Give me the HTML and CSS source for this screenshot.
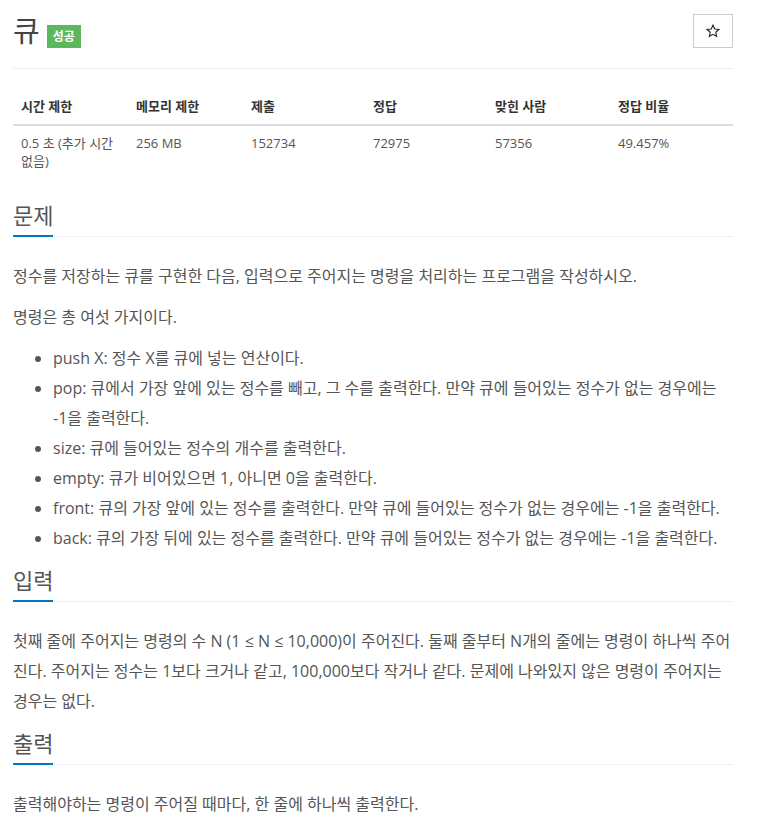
FILE: index.html
```html
<!DOCTYPE html>
<html lang="ko">
<head>
<meta charset="utf-8">
<title>큐</title>
<link rel="stylesheet" href="styles.css">
</head>
<body>
<div class="page">
  <div class="title-row">
    <div class="title-group">
      <h1 class="title">큐</h1>
      <span class="badge">성공</span>
    </div>
    <button class="star-btn" type="button" aria-label="즐겨찾기">
      <svg width="14" height="14" viewBox="0 0 24 24"><polygon points="12,2 15,8.6 22,9.4 16.8,14.2 18.2,21.2 12,17.7 5.8,21.2 7.2,14.2 2,9.4 9,8.6" fill="none" stroke="#2a2a2a" stroke-width="2" stroke-linejoin="miter"/></svg>
    </button>
  </div>
  <hr class="rule">
  <table class="info">
    <thead>
      <tr><th class="c1">시간 제한</th><th class="c2">메모리 제한</th><th class="c3">제출</th><th class="c4">정답</th><th class="c5">맞힌 사람</th><th class="c6">정답 비율</th></tr>
    </thead>
    <tbody>
      <tr><td>0.5 초 (추가 시간 없음)</td><td>256 MB</td><td>152734</td><td>72975</td><td>57356</td><td>49.457%</td></tr>
    </tbody>
  </table>

  <section class="section">
    <div class="headline"><h2>문제</h2></div>
    <div class="text">
      <p>정수를 저장하는 큐를 구현한 다음, 입력으로 주어지는 명령을 처리하는 프로그램을 작성하시오.</p>
      <p>명령은 총 여섯 가지이다.</p>
      <ul>
        <li>push X: 정수 X를 큐에 넣는 연산이다.</li>
        <li>pop: 큐에서 가장 앞에 있는 정수를 빼고, 그 수를 출력한다. 만약 큐에 들어있는 정수가 없는 경우에는 -1을 출력한다.</li>
        <li>size: 큐에 들어있는 정수의 개수를 출력한다.</li>
        <li>empty: 큐가 비어있으면 1, 아니면 0을 출력한다.</li>
        <li>front: 큐의 가장 앞에 있는 정수를 출력한다. 만약 큐에 들어있는 정수가 없는 경우에는 -1을 출력한다.</li>
        <li>back: 큐의 가장 뒤에 있는 정수를 출력한다. 만약 큐에 들어있는 정수가 없는 경우에는 -1을 출력한다.</li>
      </ul>
    </div>
  </section>

  <section class="section">
    <div class="headline"><h2>입력</h2></div>
    <div class="text">
      <p>첫째 줄에 주어지는 명령의 수 N (1 ≤ N ≤ 10,000)이 주어진다. 둘째 줄부터 N개의 줄에는 명령이 하나씩 주어진다. 주어지는 정수는 1보다 크거나 같고, 100,000보다 작거나 같다. 문제에 나와있지 않은 명령이 주어지는 경우는 없다.</p>
    </div>
  </section>

  <section class="section">
    <div class="headline"><h2>출력</h2></div>
    <div class="text">
      <p>출력해야하는 명령이 주어질 때마다, 한 줄에 하나씩 출력한다.</p>
    </div>
  </section>
</div>
</body>
</html>
```
FILE: styles.css
```css
* { box-sizing: border-box; }
html, body { margin: 0; padding: 0; background: #fff; }
body {
  font-family: "Open Sans", "Noto Sans CJK KR", sans-serif;
  color: #555;
  font-size: 13px;
  line-height: 1.42857;
}
.page {
  width: 720px;
  margin-left: 13px;
}
.title-row {
  display: flex;
  justify-content: space-between;
  align-items: flex-start;
  margin-top: 14px;
  height: 34px;
}
.title-group {
  display: flex;
  align-items: flex-start;
}
.title {
  margin: 0;
  font-size: 29px;
  font-weight: 400;
  line-height: 34px;
  color: #444;
}
.badge {
  margin-left: 7px;
  margin-top: 11px;
  background: #5cb85c;
  color: #fff;
  font-size: 12px;
  font-weight: 700;
  line-height: 15px;
  padding: 4px 6px;
}
.star-btn {
  width: 40px;
  height: 34px;
  border: 1px solid #ccc;
  background: #fff;
  padding: 0;
  display: flex;
  align-items: center;
  justify-content: center;
}
.rule {
  border: 0;
  border-top: 1px solid #eee;
  margin: 20px 0;
}
.info {
  width: 720px;
  border-collapse: collapse;
  margin-bottom: 20px;
  table-layout: fixed;
}
.info th, .info td {
  text-align: left;
  padding: 8px;
  vertical-align: top;
  line-height: 18.5px;
}
.info th {
  font-weight: 700;
  color: #333;
  border-bottom: 2px solid #ddd;
}
.c1, .c2 { width: 115px; }
.c3, .c4 { width: 122px; }
.c5, .c6 { width: 123px; }
.section { margin: 0; }
.headline {
  border-bottom: 1px dotted #dfe4ea;
  margin-bottom: 24px;
}
.headline h2 {
  display: inline-block;
  margin: 0 0 -1px;
  font-size: 22px;
  font-weight: 400;
  line-height: 32px;
  padding-bottom: 4px;
  color: #555;
  border-bottom: 2px solid #0076c0;
}
.text {
  font-size: 16px;
  line-height: 30px;
  color: #555;
}
.text p { margin: 0 0 11px; }
.text ul { margin: 0 0 11px; padding-left: 40px; }
.text li { margin: 0; }
```
